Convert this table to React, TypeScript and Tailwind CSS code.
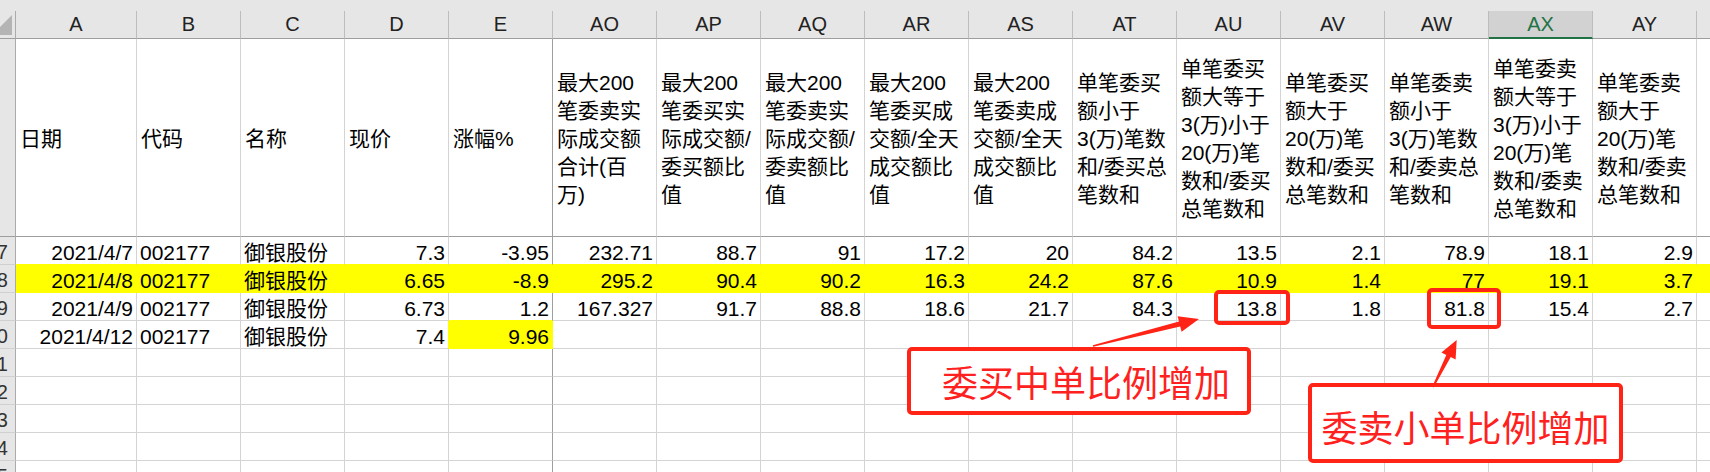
const COLS = ["A", "B", "C", "D", "E", "AO", "AP", "AQ", "AR", "AS", "AT", "AU", "AV", "AW", "AX", "AY"];

const HEAD: string[][] = [
  ["日期"],
  ["代码"],
  ["名称"],
  ["现价"],
  ["涨幅%"],
  ["最大200", "笔委卖实", "际成交额", "合计(百", "万)"],
  ["最大200", "笔委买实", "际成交额/", "委买额比", "值"],
  ["最大200", "笔委卖实", "际成交额/", "委卖额比", "值"],
  ["最大200", "笔委买成", "交额/全天", "成交额比", "值"],
  ["最大200", "笔委卖成", "交额/全天", "成交额比", "值"],
  ["单笔委买", "额小于", "3(万)笔数", "和/委买总", "笔数和"],
  ["单笔委买", "额大等于", "3(万)小于", "20(万)笔", "数和/委买", "总笔数和"],
  ["单笔委买", "额大于", "20(万)笔", "数和/委买", "总笔数和"],
  ["单笔委卖", "额小于", "3(万)笔数", "和/委卖总", "笔数和"],
  ["单笔委卖", "额大等于", "3(万)小于", "20(万)笔", "数和/委卖", "总笔数和"],
  ["单笔委卖", "额大于", "20(万)笔", "数和/委卖", "总笔数和"],
];

const BLANK = Array(16).fill("");

const ROWS: { n: string; yellow?: boolean; cells: string[] }[] = [
  { n: "17", cells: ["2021/4/7", "002177", "御银股份", "7.3", "-3.95", "232.71", "88.7", "91", "17.2", "20", "84.2", "13.5", "2.1", "78.9", "18.1", "2.9"] },
  { n: "18", yellow: true, cells: ["2021/4/8", "002177", "御银股份", "6.65", "-8.9", "295.2", "90.4", "90.2", "16.3", "24.2", "87.6", "10.9", "1.4", "77", "19.1", "3.7"] },
  { n: "19", cells: ["2021/4/9", "002177", "御银股份", "6.73", "1.2", "167.327", "91.7", "88.8", "18.6", "21.7", "84.3", "13.8", "1.8", "81.8", "15.4", "2.7"] },
  { n: "20", cells: ["2021/4/12", "002177", "御银股份", "7.4", "9.96", "", "", "", "", "", "", "", "", "", "", ""] },
  { n: "21", cells: BLANK },
  { n: "22", cells: BLANK },
  { n: "23", cells: BLANK },
  { n: "24", cells: BLANK },
  { n: "25", cells: BLANK },
];

// row index, col index -> has yellow fill
function isYellow(r: number, c: number) {
  if (r < 0 || r >= ROWS.length) return false;
  if (ROWS[r].yellow) return true;
  return r === 3 && c === 4;
}

function DataCell({ r, c, value }: { r: number; c: number; value: string }) {
  const yellow = isYellow(r, c);
  const rightYellow = yellow || (c < 16 && isYellow(r, c + 1));
  const belowYellow = yellow || isYellow(r + 1, c);
  const left = c === 1 || c === 2;
  return (
    <div
      className={`h-[28px] flex items-end overflow-hidden whitespace-nowrap px-[3px] border-r border-b leading-[23px] ${
        left ? "justify-start" : "justify-end"
      } ${yellow ? "bg-[#ffff00]" : "bg-white"} ${
        rightYellow ? "border-r-[#ffff00]" : c === 4 ? "border-r-[#9e9e9e]" : "border-r-[#d4d4d4]"
      } ${belowYellow ? "border-b-[#ffff00]" : "border-b-[#d4d4d4]"}`}
    >
      {value}
    </div>
  );
}

function Arrow({ points }: { points: string }) {
  return <polygon points={points} fill="#ff2416" />;
}

export default function App() {
  return (
    <div className="relative w-[1710px] h-[472px] overflow-hidden bg-white text-black text-[21px] font-['Liberation_Sans','Noto_Sans_CJK_SC',sans-serif]">
      <div className="grid grid-cols-[16px_121px_repeat(15,104px)_1fr]">
        {/* top strip */}
        <div className="col-span-full h-[11px] bg-[#e6e6e6]" />

        {/* column letters */}
        <div className="h-[28px] bg-[#e6e6e6] border-r border-b border-r-[#ababab] border-b-[#9e9e9e] overflow-hidden">
          <svg width="16" height="28">
            <polygon points="12,4 12,24 -8,24" fill="#b4b4b4" />
          </svg>
        </div>
        {COLS.map((c) => (
          <div
            key={c}
            className={`h-[28px] flex items-center justify-center border-r border-r-[#bdbdbd] text-[20px] leading-[27px] ${
              c === "AX"
                ? "bg-[#d2d2d2] text-[#217346] border-b-2 border-b-[#217346]"
                : "bg-[#e6e6e6] text-[#222] border-b border-b-[#9e9e9e]"
            }`}
          >
            {c}
          </div>
        ))}
        <div className="h-[28px] bg-[#e6e6e6] border-b border-b-[#9e9e9e]" />

        {/* header row */}
        <div className="h-[198px] bg-[#e6e6e6] border-r border-b border-r-[#ababab] border-b-[#9e9e9e]" />
        {HEAD.map((lines, i) => (
          <div
            key={i}
            className={`h-[198px] flex flex-col justify-center px-[4px] pt-[3px] leading-[28px] border-r border-b border-b-[#9e9e9e] ${
              i === 4 ? "border-r-[#9e9e9e]" : "border-r-[#d4d4d4]"
            }`}
          >
            {lines.map((l, j) => (
              <span key={j} className="whitespace-nowrap">
                {l}
              </span>
            ))}
          </div>
        ))}
        <div className="h-[198px] border-b border-b-[#9e9e9e]" />

        {/* data rows */}
        {ROWS.map((row, r) => (
          <div key={row.n} className="contents">
            <div className="h-[28px] flex items-end justify-end pr-[7px] overflow-hidden whitespace-nowrap bg-[#e6e6e6] border-r border-b border-r-[#ababab] border-b-[#d0d0d0] text-[20px] leading-[23px] text-[#333]">
              {row.n}
            </div>
            {row.cells.map((v, c) => (
              <DataCell key={c} r={r} c={c} value={v} />
            ))}
            <div
              className={`h-[28px] border-b ${
                row.yellow
                  ? "bg-[#ffff00] border-b-[#ffff00]"
                  : isYellow(r + 1, 0)
                  ? "border-b-[#ffff00]"
                  : "border-b-[#d4d4d4]"
              }`}
            />
          </div>
        ))}
      </div>

      {/* annotations */}
      <div className="pointer-events-none absolute inset-0">
        <div className="absolute left-[1214px] top-[290px] w-[76px] h-[35px] border-4 border-[#ff2416] rounded-[5px]" />
        <div className="absolute left-[1427px] top-[288px] w-[74px] h-[41px] border-4 border-[#ff2416] rounded-[5px]" />
        <div className="absolute left-[907px] top-[347px] w-[344px] h-[68px] border-4 border-[#ff2416] rounded-[5px] bg-white flex items-center pl-[31px] text-[36px] leading-[40px] text-[#ff2020] font-['Noto_Sans_CJK_SC',sans-serif] whitespace-nowrap">
          委买中单比例增加
        </div>
        <div className="absolute left-[1308px] top-[383px] w-[315px] h-[80px] border-4 border-[#ff2416] rounded-[5px] bg-white flex items-center justify-center pt-[6px] text-[36px] leading-[40px] text-[#ff2020] font-['Noto_Sans_CJK_SC',sans-serif] whitespace-nowrap">
          委卖小单比例增加
        </div>
        <svg className="absolute left-0 top-0" width="1710" height="472">
          <Arrow points="1093.2,346.8 1180.2,326.4 1181.6,331.8 1199,319 1177.6,316.2 1179,321.6 1092.8,345.2" />
          <Arrow points="1433.7,387.4 1450.7,357.1 1455.6,359.6 1456.7,340 1441.4,352.4 1446.3,354.9 1432.3,386.6" />
        </svg>
      </div>
    </div>
  );
}
